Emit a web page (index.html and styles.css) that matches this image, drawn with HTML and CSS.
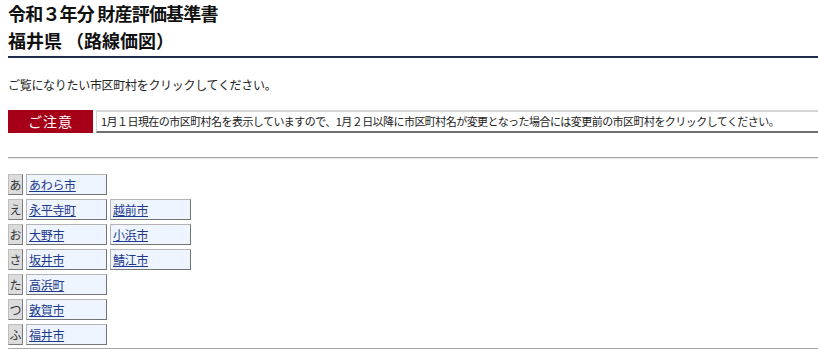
FILE: index.html
```html
<!DOCTYPE html>
<html lang="ja">
<head>
<meta charset="utf-8">
<title>令和３年分 財産評価基準書 福井県 （路線価図）</title>
<link rel="stylesheet" href="styles.css">
</head>
<body>
<div class="page">
  <h1 class="title"><span class="title-year">令和３年分 財産評価基準書</span><br>福井県 （路線価図）</h1>
  <p class="intro">ご覧になりたい市区町村をクリックしてください。</p>
  <div class="notice">
    <div class="notice-label">ご注意</div>
    <div class="notice-text">1月１日現在の市区町村名を表示していますので、1月２日以降に市区町村名が変更となった場合には変更前の市区町村をクリックしてください。</div>
  </div>
  <div class="rule rule-top"></div>
  <div class="cities">
    <div class="row"><span class="kana">あ</span><a class="city" href="#">あわら市</a></div>
    <div class="row"><span class="kana">え</span><a class="city" href="#">永平寺町</a><a class="city" href="#">越前市</a></div>
    <div class="row"><span class="kana">お</span><a class="city" href="#">大野市</a><a class="city" href="#">小浜市</a></div>
    <div class="row"><span class="kana">さ</span><a class="city" href="#">坂井市</a><a class="city" href="#">鯖江市</a></div>
    <div class="row"><span class="kana">た</span><a class="city" href="#">高浜町</a></div>
    <div class="row"><span class="kana">つ</span><a class="city" href="#">敦賀市</a></div>
    <div class="row"><span class="kana">ふ</span><a class="city" href="#">福井市</a></div>
  </div>
  <div class="rule rule-bottom"></div>
</div>
</body>
</html>
```

FILE: styles.css
```css
html, body {
  margin: 0;
  padding: 0;
  background: #ffffff;
}

body {
  font-family: "Noto Sans CJK JP", "Noto Sans", sans-serif;
  color: #222222;
}

.page {
  padding: 0 0 0 8px;
}

.title {
  margin: 0;
  font-size: 18px;
  font-weight: bold;
  line-height: 27px;
  color: #111111;
  padding-bottom: 2px;
  border-bottom: 2px solid #1d2c4c;
}

.title-year {
  letter-spacing: -0.8px;
}

.intro {
  margin: 18px 0 0 0;
  font-size: 12px;
  line-height: 18px;
  letter-spacing: -0.3px;
}

.notice {
  margin-top: 16px;
  display: flex;
  gap: 3px;
  height: 23px;
}

.notice-label {
  width: 85px;
  flex: none;
  background: #a50018;
  color: #ffffff;
  font-size: 14px;
  line-height: 23px;
  text-align: center;
  letter-spacing: 1px;
}

.notice-text {
  flex: 1;
  box-sizing: border-box;
  border-top: 2px solid #d4d4d4;
  border-left: 1px solid #d4d4d4;
  border-bottom: 2px solid #6e6e6e;
  font-size: 11px;
  line-height: 19px;
  padding-left: 4px;
  letter-spacing: -0.55px;
  white-space: nowrap;
  overflow: hidden;
  color: #222222;
}

.rule {
  border-top: 1px solid #a8a8a8;
  border-bottom: 1px solid #e4e4e4;
}

.rule-top {
  margin-top: 24px;
}

.cities {
  margin-top: 15px;
  display: flex;
  flex-direction: column;
  gap: 4px;
}

.row {
  display: flex;
  gap: 3px;
  height: 21px;
}

.kana {
  box-sizing: border-box;
  width: 15px;
  background: #dcdcdc;
  border: 1px solid;
  border-color: #bdbdbd #7a7a7a #7a7a7a #bdbdbd;
  font-size: 12px;
  line-height: 19px;
  text-align: center;
  color: #333333;
}

.city {
  box-sizing: border-box;
  width: 81px;
  background: #eef5ff;
  border: 1px solid;
  border-color: #b4b4b4 #747474 #747474 #b4b4b4;
  padding-left: 2px;
  font-size: 12px;
  line-height: 19px;
  color: #1f3a8c;
  text-decoration: underline;
  letter-spacing: -0.3px;
}

.rule-bottom {
  margin-top: 3px;
}
```
